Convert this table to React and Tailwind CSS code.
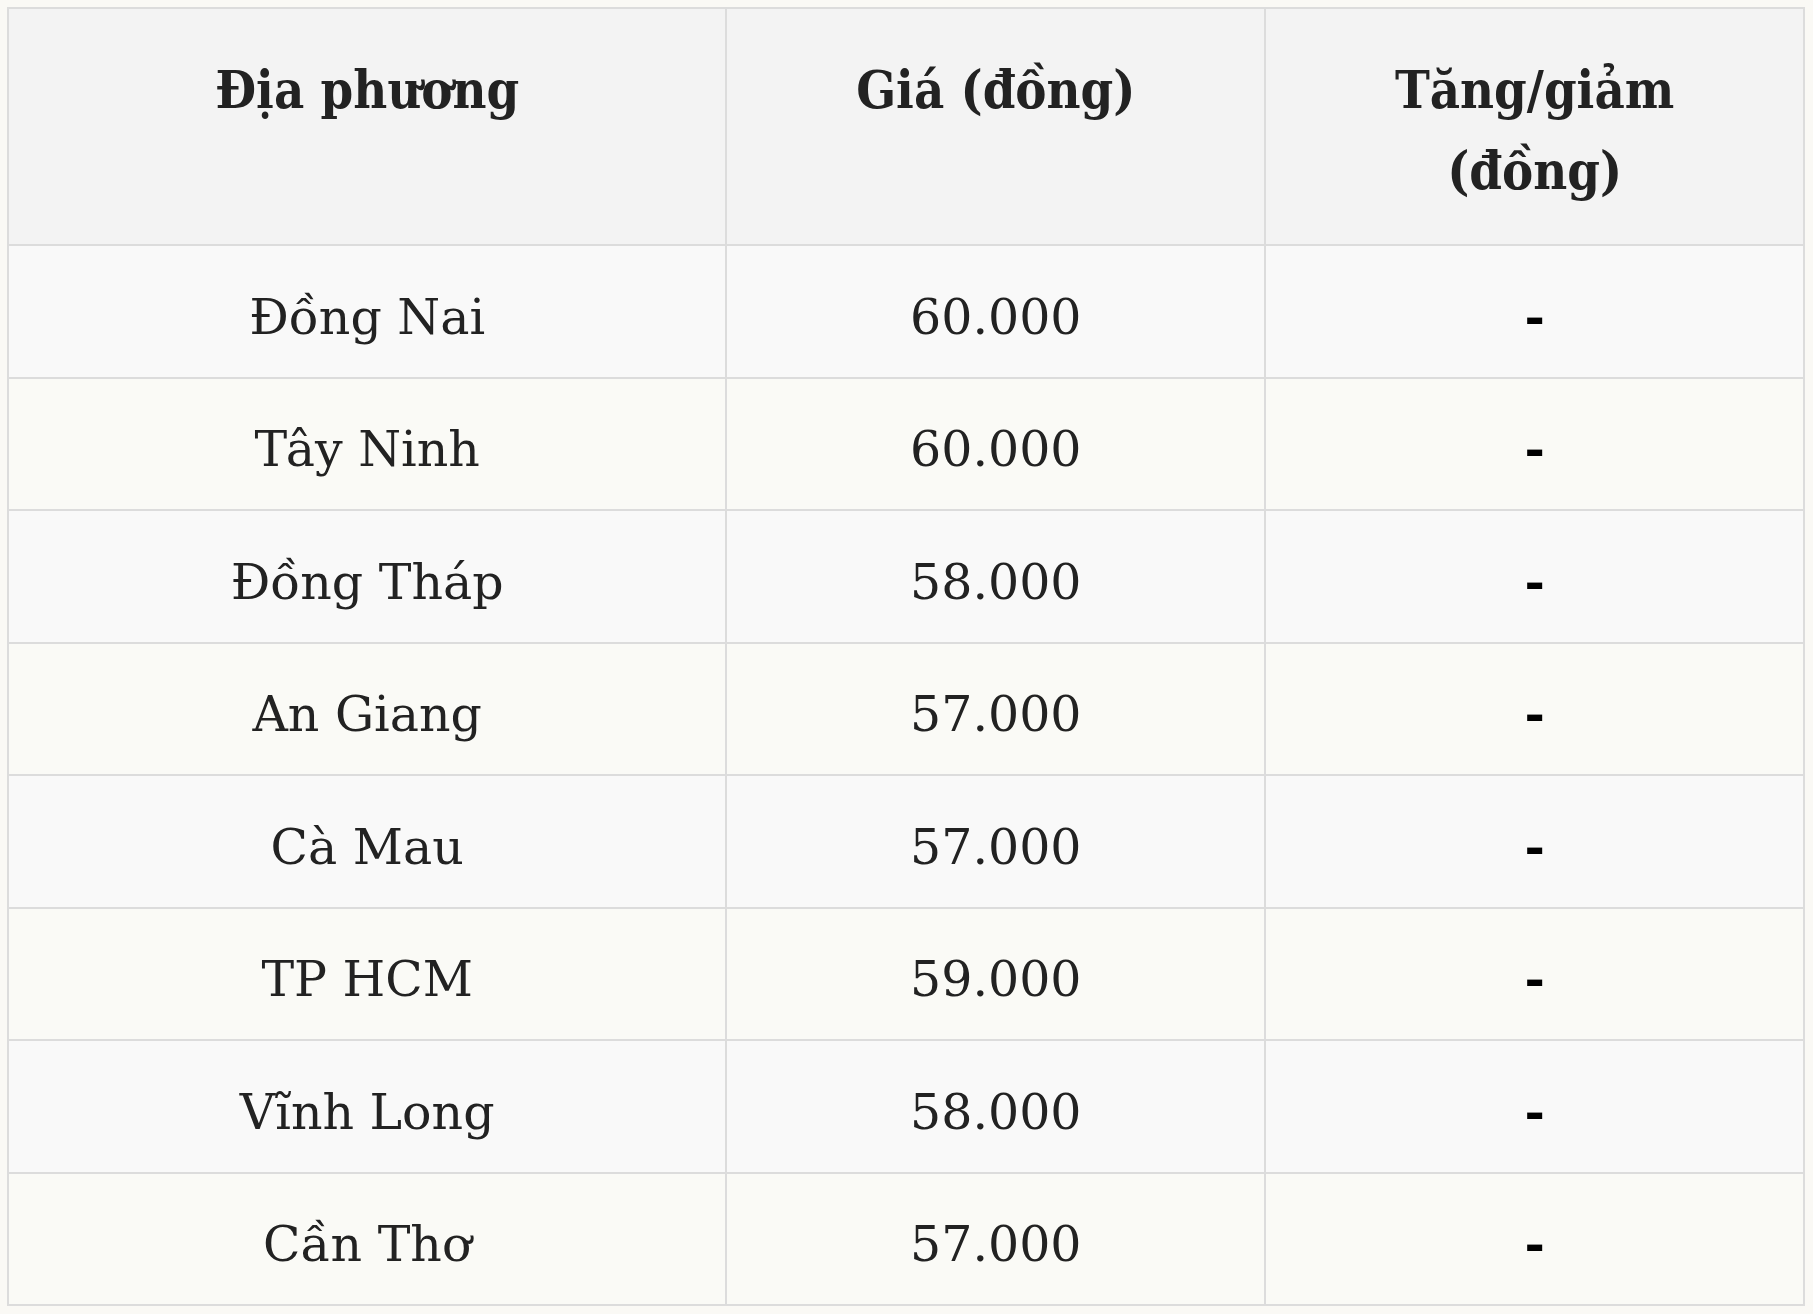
import React from "react";

const rows = [
  ["Đồng Nai", "60.000", "-"],
  ["Tây Ninh", "60.000", "-"],
  ["Đồng Tháp", "58.000", "-"],
  ["An Giang", "57.000", "-"],
  ["Cà Mau", "57.000", "-"],
  ["TP HCM", "59.000", "-"],
  ["Vĩnh Long", "58.000", "-"],
  ["Cần Thơ", "57.000", "-"],
];

const th =
  "border-2 border-[#dcdcdc] px-5 pt-[40px] pb-[33px] align-top text-center text-[52px] leading-[81px] font-bold [font-family:'DejaVu_Serif_Condensed','DejaVu_Serif',serif] [font-stretch:condensed]";
const td =
  "h-[132.5px] border-2 border-[#dcdcdc] px-5 pt-[12px] align-middle text-center text-[49px] leading-[81px]";

export default function App() {
  return (
    <div className="min-h-[1314px] w-full bg-[#faf9f5] pl-[7px] pt-[7px] text-[#222222] [font-family:'DejaVu_Serif',serif]">
      <table className="w-[1798px] table-fixed border-collapse border-2 border-[#dcdcdc]">
        <colgroup>
          <col className="w-[40%]" />
          <col className="w-[30%]" />
          <col className="w-[30%]" />
        </colgroup>
        <thead>
          <tr className="bg-[#f3f3f3]">
            <th className={th}>Địa phương</th>
            <th className={th}>Giá (đồng)</th>
            <th className={th}>
              Tăng/giảm
              <br />
              (đồng)
            </th>
          </tr>
        </thead>
        <tbody>
          {rows.map((r, i) => (
            <tr key={i} className={i % 2 === 0 ? "bg-[#f9f9f9]" : "bg-[#fafaf6]"}>
              <td className={td}>{r[0]}</td>
              <td className={td}>{r[1]}</td>
              <td className={td + " font-bold text-black"}>{r[2]}</td>
            </tr>
          ))}
        </tbody>
      </table>
    </div>
  );
}
